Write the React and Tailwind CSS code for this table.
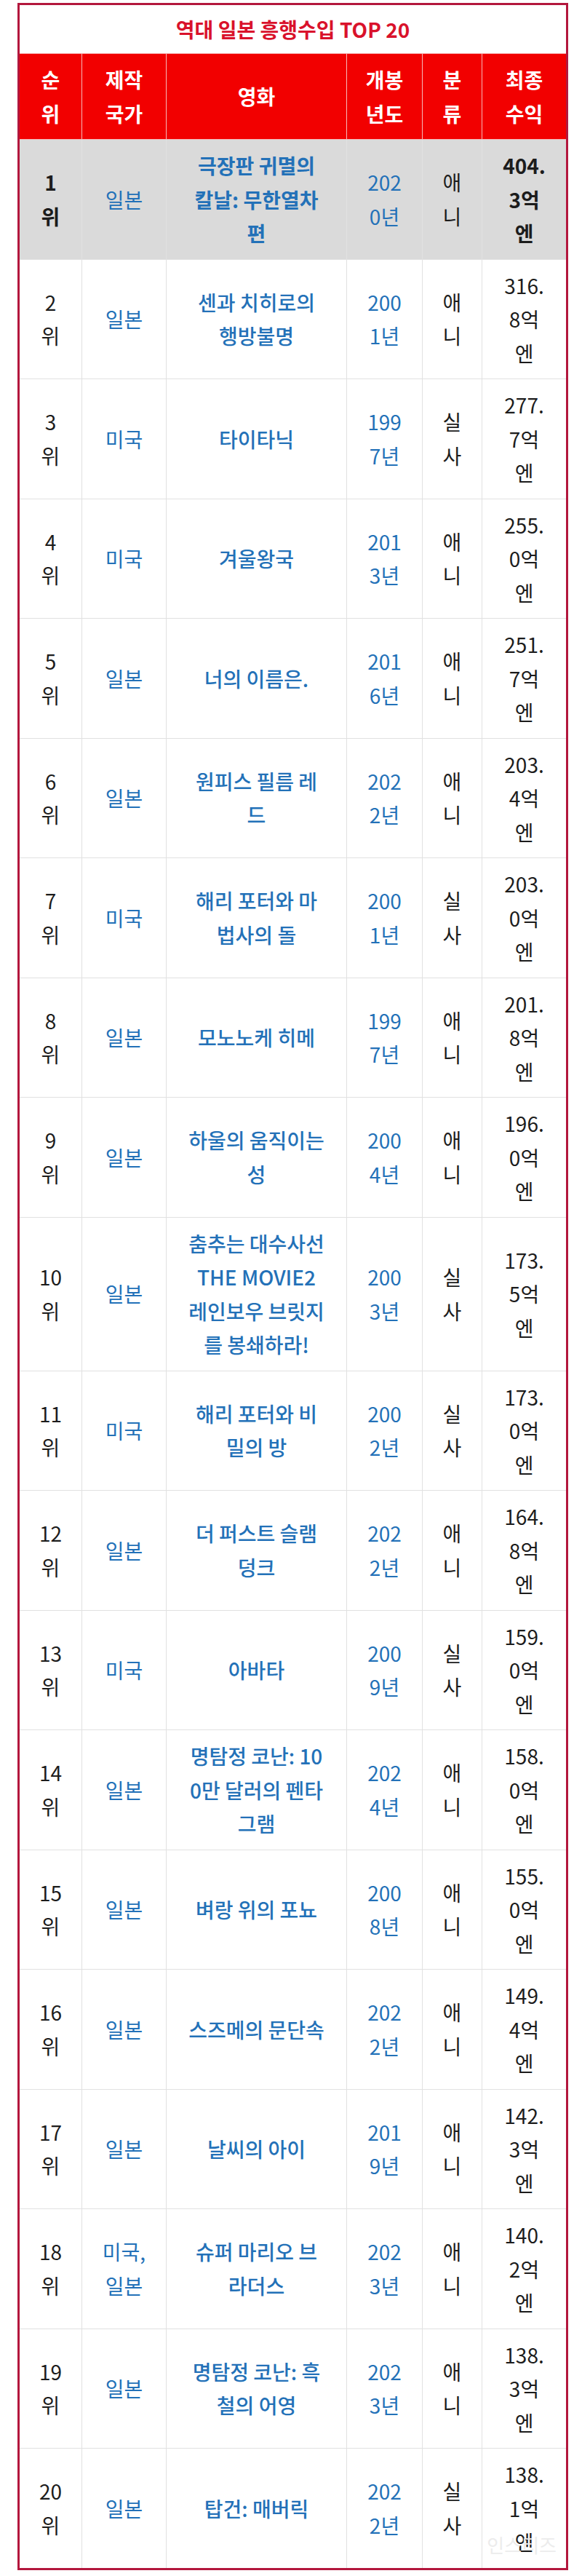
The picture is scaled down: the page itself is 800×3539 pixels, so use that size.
const rows = [
  { rank: "1\n위", country: "일본", title: "극장판 귀멸의\n칼날: 무한열차\n편", year: "202\n0년", kind: "애\n니", gross: "404.\n3억\n엔", top: true },
  { rank: "2\n위", country: "일본", title: "센과 치히로의\n행방불명", year: "200\n1년", kind: "애\n니", gross: "316.\n8억\n엔" },
  { rank: "3\n위", country: "미국", title: "타이타닉", year: "199\n7년", kind: "실\n사", gross: "277.\n7억\n엔" },
  { rank: "4\n위", country: "미국", title: "겨울왕국", year: "201\n3년", kind: "애\n니", gross: "255.\n0억\n엔" },
  { rank: "5\n위", country: "일본", title: "너의 이름은.", year: "201\n6년", kind: "애\n니", gross: "251.\n7억\n엔" },
  { rank: "6\n위", country: "일본", title: "원피스 필름 레\n드", year: "202\n2년", kind: "애\n니", gross: "203.\n4억\n엔" },
  { rank: "7\n위", country: "미국", title: "해리 포터와 마\n법사의 돌", year: "200\n1년", kind: "실\n사", gross: "203.\n0억\n엔" },
  { rank: "8\n위", country: "일본", title: "모노노케 히메", year: "199\n7년", kind: "애\n니", gross: "201.\n8억\n엔" },
  { rank: "9\n위", country: "일본", title: "하울의 움직이는\n성", year: "200\n4년", kind: "애\n니", gross: "196.\n0억\n엔" },
  { rank: "10\n위", country: "일본", title: "춤추는 대수사선\nTHE MOVIE2\n레인보우 브릿지\n를 봉쇄하라!", year: "200\n3년", kind: "실\n사", gross: "173.\n5억\n엔" },
  { rank: "11\n위", country: "미국", title: "해리 포터와 비\n밀의 방", year: "200\n2년", kind: "실\n사", gross: "173.\n0억\n엔" },
  { rank: "12\n위", country: "일본", title: "더 퍼스트 슬램\n덩크", year: "202\n2년", kind: "애\n니", gross: "164.\n8억\n엔" },
  { rank: "13\n위", country: "미국", title: "아바타", year: "200\n9년", kind: "실\n사", gross: "159.\n0억\n엔" },
  { rank: "14\n위", country: "일본", title: "명탐정 코난: 10\n0만 달러의 펜타\n그램", year: "202\n4년", kind: "애\n니", gross: "158.\n0억\n엔" },
  { rank: "15\n위", country: "일본", title: "벼랑 위의 포뇨", year: "200\n8년", kind: "애\n니", gross: "155.\n0억\n엔" },
  { rank: "16\n위", country: "일본", title: "스즈메의 문단속", year: "202\n2년", kind: "애\n니", gross: "149.\n4억\n엔" },
  { rank: "17\n위", country: "일본", title: "날씨의 아이", year: "201\n9년", kind: "애\n니", gross: "142.\n3억\n엔" },
  { rank: "18\n위", country: "미국,\n일본", title: "슈퍼 마리오 브\n라더스", year: "202\n3년", kind: "애\n니", gross: "140.\n2억\n엔" },
  { rank: "19\n위", country: "일본", title: "명탐정 코난: 흑\n철의 어영", year: "202\n3년", kind: "애\n니", gross: "138.\n3억\n엔" },
  { rank: "20\n위", country: "일본", title: "탑건: 매버릭", year: "202\n2년", kind: "실\n사", gross: "138.\n1억\n엔" },
];

const headers = ["순\n위", "제작\n국가", "영화", "개봉\n년도", "분\n류", "최종\n수익"];

const cell = "border border-[#e1e1e1] py-[12px] text-center align-middle whitespace-pre-line";

export default function App() {
  return (
    <div
      className="min-h-screen bg-white pt-[4px] pl-[24px] pb-[6px]"
      style={{ fontFamily: '"Noto Sans CJK KR", "Noto Sans", sans-serif' }}
    >
      <div className="relative w-[757px]">
        <table className="w-[757px] table-fixed border-collapse border-[3px] border-[#b3173d] text-[28px] leading-[46.5px]">
          <colgroup>
            <col className="w-[87px]" />
            <col className="w-[116px]" />
            <col className="w-[248px]" />
            <col className="w-[104px]" />
            <col className="w-[82px]" />
            <col className="w-[117px]" />
          </colgroup>
          <thead>
            <tr>
              <th colSpan={6} className="h-[68px] bg-white text-center align-middle font-bold text-[#d9122b]">
                역대 일본 흥행수입 TOP 20
              </th>
            </tr>
            <tr>
              {headers.map((h) => (
                <th
                  key={h}
                  className="border border-[#f6b9b9] bg-[#f20000] py-[12px] text-center align-middle font-bold text-white whitespace-pre-line"
                >
                  {h}
                </th>
              ))}
            </tr>
          </thead>
          <tbody>
            {rows.map((r) => (
              <tr key={r.rank} className={r.top ? "bg-[#dadada]" : "bg-white"}>
                <td className={`${cell} text-[#1c1c1c] ${r.top ? "font-bold" : ""}`}>{r.rank}</td>
                <td className={`${cell} text-[#2371b8]`}>{r.country}</td>
                <td className={`${cell} text-[#2371b8] ${r.top ? "font-bold" : "font-medium"}`}>{r.title}</td>
                <td className={`${cell} text-[#2371b8]`}>{r.year}</td>
                <td className={`${cell} text-[#1c1c1c]`}>{r.kind}</td>
                <td className={`${cell} text-[#1c1c1c] ${r.top ? "font-bold" : ""}`}>{r.gross}</td>
              </tr>
            ))}
          </tbody>
        </table>
        {/* faint watermark */}
        <span className="absolute right-[16px] bottom-[22px] text-[26px] leading-none text-[#ececec] select-none">
          인스티즈
        </span>
      </div>
    </div>
  );
}
